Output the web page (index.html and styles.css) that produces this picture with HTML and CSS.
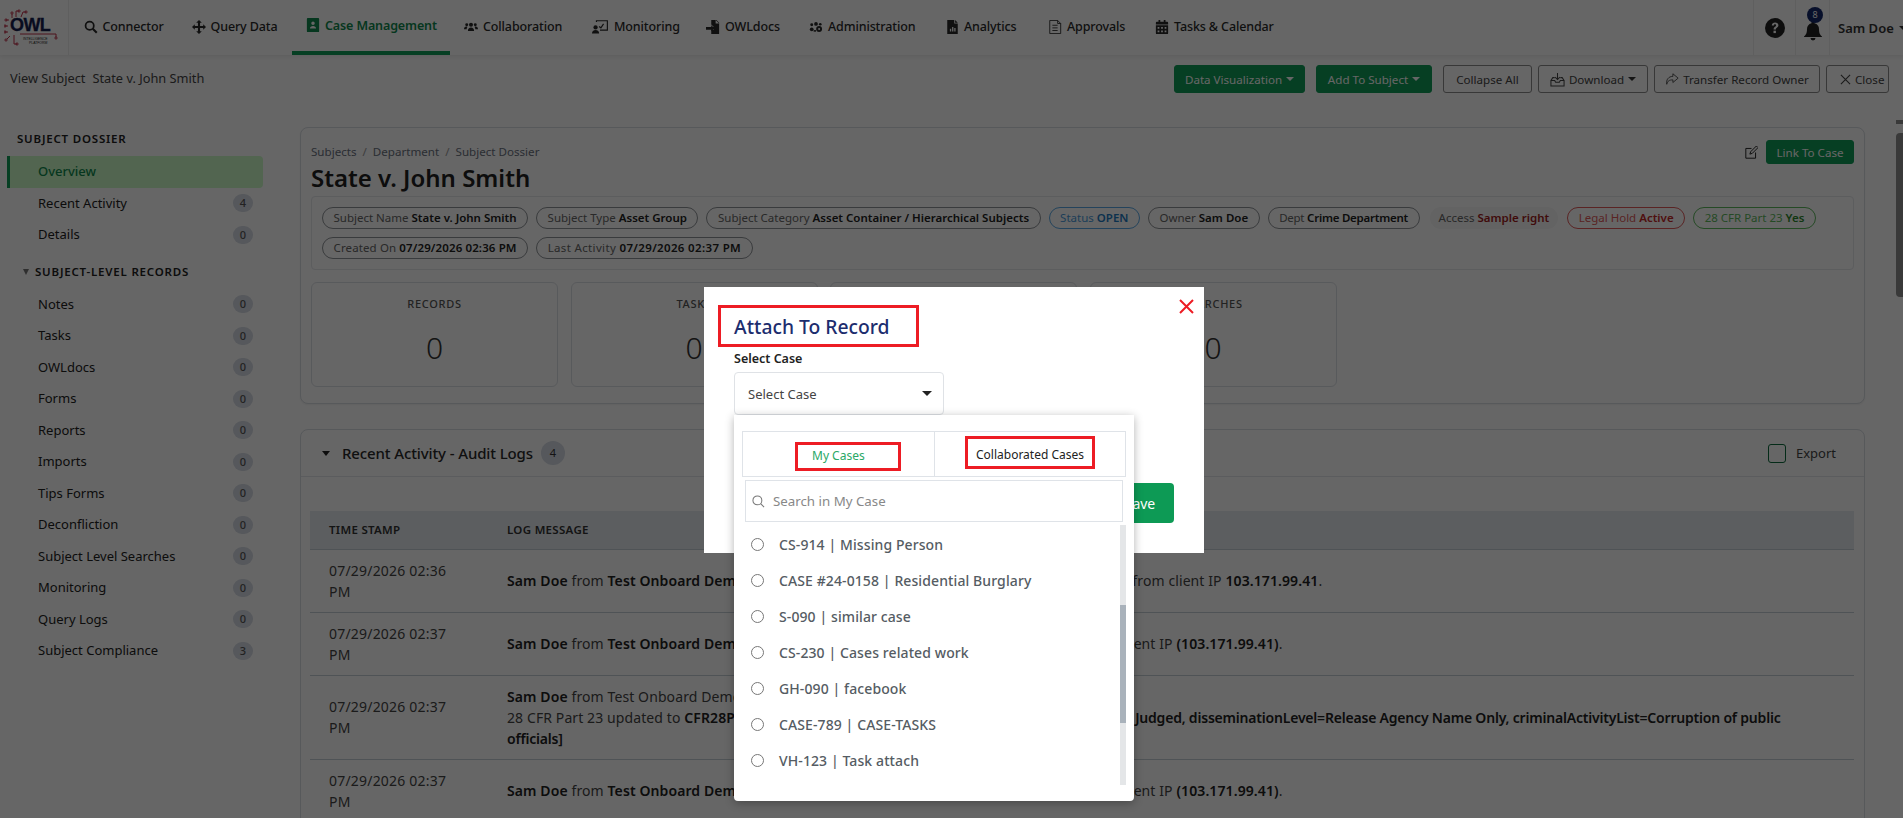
FILE: index.html
```html
<!DOCTYPE html>
<html lang="en">
<head>
<meta charset="utf-8">
<title>State v. John Smith</title>
<link rel="stylesheet" href="styles.css">
</head>
<body>
<header class="topnav">
  <div class="logo">
    <svg width="56" height="38" viewBox="0 0 56 38">
      <g fill="none" stroke="#c0304a" stroke-width="1">
        <path d="M8 9 L8 5 M12 8 L12 2 L15 2 M17 8 L19 3 L22 3 M5 11 L2 11 M4 17 L1 17 M4 23 L1 23 M6 27 L3 30 M10 26 L10 35 L13 35 M16 25 L52 25 L52 28"/>
        <circle cx="8" cy="4" r="1.100"/><circle cx="15" cy="2" r="1.100"/><circle cx="22" cy="3" r="1.100"/><circle cx="2" cy="11" r="1.100"/><circle cx="1" cy="17" r="1.100"/><circle cx="1" cy="23" r="1.100"/><circle cx="2" cy="31" r="1.100"/><circle cx="13" cy="35" r="1.100"/><circle cx="52" cy="29" r="1.100"/>
      </g>
      <text x="6" y="22" class="logo-owl">OWL</text>
      <text x="19" y="31" class="logo-sub">INTELLIGENCE</text>
      <text x="25" y="35" class="logo-sub">PLATFORM</text>
    </svg>
  </div>
  <nav class="navlist">
    <a class="navitem"><svg class="ni" viewBox="0 0 16 16"><circle cx="6.5" cy="6.5" r="4.7" fill="none" stroke="currentColor" stroke-width="2"/><path d="M10 10l4.6 4.6" stroke="currentColor" stroke-width="2.4"/></svg><span>Connector</span></a>
    <a class="navitem"><svg class="ni" viewBox="0 0 16 16"><path d="M8 0l3.200 3.200H9.200v3.600h3.600v-2L16 8l-3.200 3.200v-2H9.200v3.600h2L8 16l-3.200-3.200h2V9.200H3.200v2L0 8l3.200-3.200v2h3.600V3.200h-2z" fill="currentColor"/></svg><span>Query Data</span></a>
    <a class="navitem active"><svg class="ni" viewBox="0 0 14 16"><path d="M1 0h12a1 1 0 0 1 1 1v14a1 1 0 0 1-1 1H1a1 1 0 0 1-1-1V1a1 1 0 0 1 1-1zm6 4a2 2 0 1 0 0 4 2 2 0 0 0 0-4zM3.5 12h7c0-2-1.500-3-3.500-3s-3.500 1-3.500 3z" fill="currentColor" fill-rule="evenodd"/></svg><span>Case Management</span></a>
    <a class="navitem"><svg class="ni" viewBox="0 0 18 16"><g fill="currentColor"><circle cx="9" cy="5" r="2.600"/><circle cx="3.500" cy="5" r="1.900"/><circle cx="14.500" cy="5" r="1.900"/><path d="M5 13c0-3 1.500-4.500 4-4.500s4 1.500 4 4.500zM0 11c0-2 1-3.500 3-3.500.8 0 1.200.2 1.500.5C3.500 9 3.500 10 3.500 11zM18 11c0-2-1-3.500-3-3.500-.8 0-1.200.2-1.500.5 1 1 1 2 1 3z"/></g></svg><span>Collaboration</span></a>
    <a class="navitem"><svg class="ni wide" viewBox="0 0 18 16"><g fill="currentColor"><circle cx="4" cy="9" r="2.400"/><path d="M0 16c0-2.500 1.500-4 4-4s4 1.500 4 4z"/></g><path d="M5 3V1.500h12.300V12H9" fill="none" stroke="currentColor" stroke-width="1.300"/><path d="M8 8l2 1.500L13 5" fill="none" stroke="currentColor" stroke-width="1.300"/></svg><span>Monitoring</span></a>
    <a class="navitem"><svg class="ni" viewBox="0 0 16 16"><path d="M6 0h6l3 3v13H6v-5h3l-2.500-3H9L6 5z M11 0v4h4z" fill="currentColor"/><path d="M0 8h6v-2l3.500 3.500L6 13v-2H0z" fill="currentColor"/></svg><span>OWLdocs</span></a>
    <a class="navitem"><svg class="ni" viewBox="0 0 18 16"><g fill="currentColor"><circle cx="9" cy="4" r="2.400"/><circle cx="3.500" cy="5" r="1.900"/><circle cx="3.500" cy="11" r="2.400"/><circle cx="13" cy="10.500" r="3.800"/><circle cx="14.500" cy="4.500" r="1.700"/><path d="M6 12h3v2H6z"/></g><circle cx="13" cy="10.500" r="1.300" fill="#fff"/></svg><span>Administration</span></a>
    <a class="navitem"><svg class="ni narrow" viewBox="0 0 12 16"><path d="M0 0h8v4h4v12H0zM9 0l3 3H9zM3 13h1.500v-3H3zm2.500 0H7V8H5.500zM8 13h1.500v-4H8z" fill="currentColor" fill-rule="evenodd"/></svg><span>Analytics</span></a>
    <a class="navitem"><svg class="ni" viewBox="0 0 14 16"><path d="M1 .5h9l3.500 3.500v11.500H1z" fill="none" stroke="currentColor"/><path d="M4 6h6M4 9h6M4 12h6M10 .5V4h3.500" fill="none" stroke="currentColor"/></svg><span>Approvals</span></a>
    <a class="navitem"><svg class="ni" viewBox="0 0 14 16"><path d="M3 0h2v2h4V0h2v2h2a1 1 0 0 1 1 1v2H0V3a1 1 0 0 1 1-1h2zM0 6h14v9a1 1 0 0 1-1 1H1a1 1 0 0 1-1-1zm2 2v2h2V8zm4 0v2h2V8zm4 0v2h2V8zm-8 4v2h2v-2zm4 0v2h2v-2zm4 0v2h2v-2z" fill="currentColor" fill-rule="evenodd"/></svg><span>Tasks &amp; Calendar</span></a>
  </nav>
  <div class="navright">
    <div class="nr-help"><svg width="20" height="20" viewBox="0 0 20 20"><circle cx="10" cy="10" r="10" fill="#222"/><path d="M6.800 7.500c0-2 1.500-3 3.300-3s3.300 1 3.300 2.800c0 2.400-2.500 2.200-2.500 4.200H8.600c0-3 2.500-2.800 2.500-4.100 0-.7-.4-1.100-1.100-1.100-.8 0-1.100.5-1.100 1.200z" fill="#fff"/><rect x="8.500" y="12.700" width="2.400" height="2.400" fill="#fff"/></svg></div>
    <div class="nr-bell"><svg width="18" height="20" viewBox="0 0 18 20"><path d="M9 0a1.500 1.500 0 0 1 1.500 1.500v.7C13.500 3 15 5.300 15 8c0 5 1.500 6 3 7.500V16H0v-.5C1.500 14 3 13 3 8c0-2.700 1.500-5 4.500-5.800v-.7A1.500 1.500 0 0 1 9 0zM6.500 17h5a2.500 2.500 0 0 1-5 0z" fill="#222"/></svg><span class="badge8">8</span></div>
    <div class="nr-user"><span>Sam Doe</span><i class="caret dark"></i></div>
  </div>
</header>

<div class="subbar">
  <div class="crumb"><span>View Subject</span><span>State v. John Smith</span></div>
  <div class="actions">
    <button class="btn green b-dv">Data Visualization <i class="caret"></i></button>
    <button class="btn green b-add">Add To Subject <i class="caret"></i></button>
    <button class="btn outline b-col">Collapse All</button>
    <button class="btn outline b-dl"><svg width="15" height="15" viewBox="0 0 16 16"><path d="M1 9l2-3h2M15 9l-2-3h-2M1 9v6h14V9h-4l-1 2H6L5 9zM8 1v7M5.500 5.500L8 8l2.500-2.500" fill="none" stroke="currentColor" stroke-width="1.100"/></svg> Download <i class="caret dark"></i></button>
    <button class="btn outline b-tr"><svg width="14" height="14" viewBox="0 0 16 16"><path d="M9 2l6 5-6 5V9C5 9 3 10 2 14 1 9 4 5 9 5z" fill="none" stroke="currentColor"/></svg> Transfer Record Owner</button>
    <button class="btn outline b-cl"><svg width="11" height="11" viewBox="0 0 12 12"><path d="M1 1l10 10M11 1L1 11" stroke="currentColor" stroke-width="1.200"/></svg> Close</button>
  </div>
</div>

<div class="workspace">
  <aside class="sidebar">
    <h4 class="sb-head">SUBJECT DOSSIER</h4>
    <a class="sb-item current">Overview</a>
    <a class="sb-item">Recent Activity<b>4</b></a>
    <a class="sb-item">Details<b>0</b></a>
    <h4 class="sb-group"><i class="tri"></i>SUBJECT-LEVEL RECORDS</h4>
    <a class="sb-item">Notes<b>0</b></a>
    <a class="sb-item">Tasks<b>0</b></a>
    <a class="sb-item">OWLdocs<b>0</b></a>
    <a class="sb-item">Forms<b>0</b></a>
    <a class="sb-item">Reports<b>0</b></a>
    <a class="sb-item">Imports<b>0</b></a>
    <a class="sb-item">Tips Forms<b>0</b></a>
    <a class="sb-item">Deconfliction<b>0</b></a>
    <a class="sb-item">Subject Level Searches<b>0</b></a>
    <a class="sb-item">Monitoring<b>0</b></a>
    <a class="sb-item">Query Logs<b>0</b></a>
    <a class="sb-item">Subject Compliance<b>3</b></a>
  </aside>

  <main class="main">
    <section class="card summary">
      <div class="sum-top">
        <div class="bread">Subjects <em>/</em> Department <em>/</em> Subject Dossier</div>
        <div class="sum-act">
          <svg width="13" height="13" viewBox="0 0 16 16"><path d="M13 8v7H1V3h7" fill="none" stroke="#222" stroke-width="1.200"/><path d="M6 10l1-3 7-7 2 2-7 7z" fill="none" stroke="#222" stroke-width="1.200"/></svg>
          <button class="btn green b-link">Link To Case</button>
        </div>
      </div>
      <h1 class="title">State v. John Smith</h1>
      <div class="pills">
        <span class="pill">Subject Name <b>State v. John Smith</b></span>
        <span class="pill">Subject Type <b>Asset Group</b></span>
        <span class="pill">Subject Category <b>Asset Container / Hierarchical Subjects</b></span>
        <span class="pill blue">Status <b>OPEN</b></span>
        <span class="pill">Owner <b>Sam Doe</b></span>
        <span class="pill p-dept">Dept <b>Crime Department</b></span>
        <span class="pill plain">Access <b>Sample right</b></span>
        <span class="pill red">Legal Hold <b>Active</b></span>
        <span class="pill grn">28 CFR Part 23 <b>Yes</b></span>
        <span class="pill p-created">Created On <b>07/29/2026 02:36 PM</b></span>
        <span class="pill p-last">Last Activity <b>07/29/2026 02:37 PM</b></span>
      </div>
      <div class="stats">
        <div class="stat"><span>RECORDS</span><strong>0</strong></div>
        <div class="stat"><span>TASKS</span><strong>0</strong></div>
        <div class="stat"><span>FORMS</span><strong>0</strong></div>
        <div class="stat"><span>SEARCHES</span><strong>0</strong></div>
      </div>
    </section>

    <section class="card audit">
      <div class="audit-head">
        <i class="tri dark"></i><h2>Recent Activity - Audit Logs</h2><span class="count">4</span>
        <label class="export"><i class="check"></i>Export</label>
      </div>
      <div class="audit-body">
        <table class="logs">
          <thead><tr><th class="c1">TIME STAMP</th><th>LOG MESSAGE</th></tr></thead>
          <tbody>
            <tr><td>07/29/2026 02:36 PM</td><td><b>Sam Doe</b> from <b>Test Onboard Demo</b> <span class="mid m1">Agency opened the subject dossier record</span> from client IP <b>103.171.99.41</b>.</td></tr>
            <tr><td>07/29/2026 02:37 PM</td><td><b>Sam Doe</b> from <b>Test Onboard Demo</b> <span class="mid m2">Agency updated the subject from the client</span>ent IP <b>(103.171.99.41)</b>.</td></tr>
            <tr><td>07/29/2026 02:37 PM</td><td><b>Sam Doe</b> from Test Onboard Demo Agency updated the subject compliance details.<br>28 CFR Part 23 updated to <b>CFR28Part23</b> <span class="mid m3"><b>[status=Active, reviewStatus=</b></span><b class="sq">Judged, disseminationLevel=Release Agency Name Only, criminalActivityList=Corruption of public officials]</b></td></tr>
            <tr><td>07/29/2026 02:37 PM</td><td><b>Sam Doe</b> from <b>Test Onboard Demo</b> <span class="mid m2">Agency updated the subject from the client</span>ent IP <b>(103.171.99.41)</b>.</td></tr>
          </tbody>
        </table>
      </div>
    </section>
  </main>

  <div class="pagebar"><i></i></div>
</div>

<div class="overlay"></div>

<div class="modal">
  <svg class="modal-x" width="15" height="15" viewBox="0 0 15 15"><path d="M1 1l13 13M14 1L1 14" stroke="#ed1c24" stroke-width="2"/></svg>
  <h3 class="modal-title">Attach To Record</h3>
  <div class="field">
    <label class="field-label">Select Case</label>
    <div class="select"><span>Select Case</span><i class="caret dark big"></i></div>
  </div>
  <div class="modal-foot"><button class="save">Save</button></div>

  <div class="dropdown">
    <div class="tabs">
      <div class="tab"><span class="mark mark-my">My Cases</span></div>
      <div class="tab"><span class="mark mark-co">Collaborated Cases</span></div>
    </div>
    <div class="search">
      <svg width="13" height="13" viewBox="0 0 14 14"><circle cx="5.800" cy="5.800" r="4.800" fill="none" stroke="#777" stroke-width="1.100"/><path d="M9.300 9.300L13 13" stroke="#777" stroke-width="1.100"/></svg>
      <span>Search in My Case</span>
    </div>
    <div class="listwrap">
      <ul class="list">
        <li><i class="radio"></i>CS-914 | Missing Person</li>
        <li><i class="radio"></i>CASE #24-0158 | Residential Burglary</li>
        <li><i class="radio"></i>S-090 | similar case</li>
        <li><i class="radio"></i>CS-230 | Cases related work</li>
        <li><i class="radio"></i>GH-090 | facebook</li>
        <li><i class="radio"></i>CASE-789 | CASE-TASKS</li>
        <li><i class="radio"></i>VH-123 | Task attach</li>
      </ul>
      <div class="listbar"><i></i></div>
    </div>
  </div>
</div>
</body>
</html>
```

FILE: styles.css
```css
* { box-sizing: border-box; }
html, body { margin: 0; padding: 0; }
body {
  position: relative;
  width: 1903px;
  height: 818px;
  overflow: hidden;
  background: #fff;
  color: #333;
  font-family: "Noto Sans", "Open Sans", sans-serif;
  font-size: 13px;
}
h1, h2, h3, h4, ul { margin: 0; padding: 0; }
i, em { font-style: normal; }

/* top navigation */
.topnav {
  display: flex;
  height: 55px;
  box-shadow: 0 2px 4px rgba(0, 0, 0, .08);
}
.logo {
  width: 69px;
  padding: 9px 0 0 4px;
  border-right: 1px solid #eee;
}
.logo-owl { font: 700 18px "Liberation Sans", sans-serif; fill: #14204f; letter-spacing: -.6px; stroke: #14204f; stroke-width: .3px; }
.logo-sub { font: 400 3.400px "Liberation Sans", sans-serif; fill: #222; }
.navlist { display: flex; flex: 1; }
.navitem {
  display: flex;
  align-items: center;
  gap: 5px;
  flex: none;
  height: 55px;
  padding: 0 0 2px 14.500px;
  font-size: 12.500px;
  letter-spacing: -.12px;
  font-weight: 500;
  color: #2a2a2a;
  white-space: nowrap;
}
.navitem:nth-child(1) { width: 108px; }
.navitem:nth-child(2) { width: 114.500px; }
.navitem:nth-child(3) { width: 158px; }
.navitem:nth-child(4) { width: 128px; }
.navitem:nth-child(5) { width: 114px; }
.navitem:nth-child(6) { width: 103px; }
.navitem:nth-child(7) { width: 138px; }
.navitem:nth-child(8) { width: 101px; }
.navitem:nth-child(9) { width: 107px; }
.ni { width: 14px; height: 14px; flex: none; }
.ni.wide { width: 16px; height: 15px; margin-right: 1px; }
.ni.narrow { width: 11px; height: 14px; margin-right: 1px; }
.navitem.active {
  color: #0f8a4e;
  font-weight: 600;
  border-bottom: 4px solid #0f9d58;
  padding-bottom: 1px;
}
.navright { display: flex; height: 55px; }
.nr-help, .nr-bell { display: flex; align-items: center; justify-content: center; border-left: 1px solid #eee; }
.nr-help { width: 42px; }
.nr-bell { position: relative; width: 35px; padding-top: 6px; border-right: 1px solid #eee; }
.badge8 {
  position: absolute;
  top: 7px;
  left: 11px;
  width: 16px;
  height: 16px;
  border-radius: 50%;
  background: #162a6b;
  color: #fff;
  font-size: 9px;
  line-height: 16px;
  text-align: center;
}
.nr-user { display: flex; align-items: center; gap: 5px; width: 73px; padding-left: 8px; font-weight: 600; white-space: nowrap; }
.caret {
  display: inline-block;
  width: 0;
  height: 0;
  border: 4px solid transparent;
  border-top-color: #fff;
  border-bottom-width: 0;
  vertical-align: middle;
}
.caret.dark { border-top-color: #333; }
.caret.big { border-width: 5px 5px 0; border-top-color: #222; }

/* action bar */
.subbar {
  display: flex;
  align-items: center;
  justify-content: space-between;
  height: 48px;
  padding: 0 14px 0 10px;
}
.crumb { display: flex; gap: 7px; margin-top: -2px; font-size: 12.800px; color: #444; }
.actions { display: flex; gap: 6px; }
.btn {
  display: inline-flex;
  align-items: center;
  justify-content: center;
  gap: 4px;
  height: 28px;
  padding: 0;
  border-radius: 3px;
  font-family: inherit;
  font-size: 11.600px;
  white-space: nowrap;
}
.btn.green { background: #0f9d58; border: 1px solid #0f9d58; color: #fff; }
.btn.outline { background: #fff; border: 1px solid #8c8c8c; color: #444; }
.b-dv { width: 131px; margin-right: 5px; }
.b-add { width: 116px; margin-right: 5px; }
.b-col { width: 89px; }
.b-dl { width: 110px; }
.b-tr { width: 166px; }
.btn.b-cl { width: 63px; justify-content: flex-start; padding-left: 13px; }

/* layout */
.workspace { display: flex; height: 715px; }
.sidebar { width: 300px; padding: 28px 37px 0 7px; flex: none; }
.sb-head { height: 16px; margin: 0 0 9px 10px; font-size: 11.500px; line-height: 16px; font-weight: 600; letter-spacing: .8px; color: #222; }
.sb-item {
  display: flex;
  align-items: center;
  justify-content: space-between;
  height: 31.500px;
  padding: 0 10px 2px 31px;
  font-size: 13px;
  color: #222;
}
.sb-item b {
  width: 20px;
  height: 18px;
  margin-top: 1px;
  border-radius: 9px;
  background: #d6dbe5;
  color: #555;
  font-size: 11px;
  font-weight: 500;
  line-height: 18px;
  text-align: center;
}
.sb-item.current {
  height: 32px;
  padding-left: 28px;
  border-left: 3px solid #0f9d58;
  border-radius: 0 4px 4px 0;
  background: #cdfdc8;
  color: #0f8a4e;
  font-weight: 500;
}
.sb-group {
  display: flex;
  align-items: center;
  height: 38px;
  padding: 3px 0 0 16px;
  gap: 6px;
  font-size: 11.500px;
  font-weight: 600;
  letter-spacing: .8px;
  color: #222;
}
.tri { width: 0; height: 0; border: 3.500px solid transparent; border-top: 6px solid #777; border-bottom-width: 0; }
.tri.dark { border-width: 5px 4px 0; border-top-color: #222; }

.main { width: 1565px; padding-top: 24px; flex: none; }
.pagebar { position: relative; width: 7px; margin: 30px 0 0 31px; flex: none; }
.pagebar::before { content: ""; position: absolute; top: -13px; left: 0; width: 7px; height: 4px; background: #8f8f8f; }
.pagebar i { display: block; height: 164px; border-radius: 4px 0 0 4px; background: #8f8f8f; }

.card { border: 1px solid #d9dee3; border-radius: 8px; background: #fff; }
.summary { height: 277px; padding: 12px 10px 0; box-shadow: 0 1px 2px rgba(0, 0, 0, .06); }
.sum-top { display: flex; justify-content: space-between; align-items: center; height: 24px; }
.bread { margin-top: -2px; font-size: 11.600px; color: #6b7280; }
.bread em { margin: 0 3px; color: #999; }
.sum-act { display: flex; align-items: center; gap: 8px; }
.b-link { width: 88px; height: 24px; }
.title { height: 32px; font-size: 24px; line-height: 28px; font-weight: 600; color: #222; }
.pills {
  display: flex;
  flex-wrap: wrap;
  align-content: flex-start;
  gap: 8px;
  height: 74px;
  padding: 10px;
  border: 1px solid #e5e8ec;
  border-radius: 4px;
}
.pill {
  height: 22px;
  padding: 0 10.500px;
  border: 1px solid #8f9398;
  border-radius: 11px;
  font-size: 11.500px;
  line-height: 19px;
  color: #666;
  white-space: nowrap;
}
.pill b { font-weight: 600; color: #222; }
.pill.p-dept { letter-spacing: -.24px; }
.pill.p-created { letter-spacing: .12px; }
.pill.p-last { letter-spacing: .35px; }
.pill.blue { border-color: #5aa9e6; color: #4a9bdc; }
.pill.blue b { color: #1f7cc4; }
.pill.plain { margin: 0 1px 0 2px; padding: 0 8px; border-color: transparent; background: #f7f7f7; }
.pill.plain b { color: #a01c1c; }
.pill.red { border-color: #e05a5a; color: #e05a5a; }
.pill.red b { color: #c62828; }
.pill.grn { border-color: #5cb85c; color: #5cb85c; }
.pill.grn b { color: #2e8b2e; }
.stats { display: grid; grid-template-columns: repeat(4, 247px); gap: 12.500px; margin-top: 12px; }
.stat {
  display: flex;
  flex-direction: column;
  align-items: center;
  height: 105px;
  padding-top: 14px;
  border: 1px solid #dde1e6;
  border-radius: 6px;
  font-size: 11px;
  letter-spacing: .7px;
  color: #555;
}
.stat span { line-height: 14px; font-weight: 500; }
.stat strong { margin-top: 19px; font-size: 30px; line-height: 36px; font-weight: 300; color: #333; letter-spacing: 0; }

.audit { height: 500px; margin-top: 25px; }
.audit-head { display: flex; align-items: center; height: 47px; padding-left: 21px; border-bottom: 1px solid #e3e6ea; }
.audit-head h2 { margin-left: 12px; font-size: 15px; letter-spacing: -.12px; font-weight: 500; color: #2a2a2a; }
.count { width: 24px; height: 24px; margin-left: 8px; border-radius: 50%; background: #d6dbe5; font-size: 11px; line-height: 24px; text-align: center; }
.export { display: flex; align-items: center; gap: 10px; margin: 0 28px 0 auto; font-size: 13px; color: #444; }
.check { width: 18px; height: 19px; border: 1.500px solid #0b6b3c; border-radius: 3px; }
.audit-body { padding: 34px 10px 0 9px; }
.logs { width: 100%; border-collapse: collapse; table-layout: fixed; }
.logs th { height: 38px; padding: 0 19px; background: #e6ebf0; border-bottom: 1px solid #c6d0d8; text-align: left; font-size: 11.500px; font-weight: 600; letter-spacing: .3px; color: #333; }
.logs .c1 { width: 178px; }
.logs td { padding: 10px 19px; border-bottom: 1px solid #c6d0d8; font-size: 14px; line-height: 21px; letter-spacing: .1px; color: #444; vertical-align: middle; }
.logs td:first-child { padding-right: 30px; letter-spacing: .2px; }
.logs td b { color: #222; font-weight: 600; }
.logs td .sq { letter-spacing: -.2px; }
.mid { display: inline-block; overflow: hidden; white-space: nowrap; vertical-align: bottom; }
.m1 { width: 380px; }
.m2 { width: 385px; }
.m3 { width: 360px; }

/* modal layer */
.overlay { position: absolute; inset: 0; background: rgba(0, 0, 0, .6); z-index: 10; }
.modal { position: absolute; left: 704px; top: 287px; z-index: 11; width: 500px; height: 266px; padding: 18px 30px 0 14px; background: #fff; }
.modal-x { position: absolute; top: 12px; right: 10px; }
.modal-title { width: 201px; height: 42px; padding-left: 13px; border: 3px solid #ed1c24; font-size: 19.300px; line-height: 38px; font-weight: 500; color: #1c2d6e; white-space: nowrap; }
.field { margin-left: 16px; padding-top: 4px; }
.field-label { display: block; height: 16px; font-size: 12.500px; line-height: 16px; font-weight: 600; color: #222; }
.select {
  display: flex;
  align-items: center;
  justify-content: space-between;
  width: 210px;
  height: 43px;
  margin-top: 5px;
  padding: 0 11px 0 13px;
  border: 1px solid #dfe2e6;
  border-radius: 4px;
  font-size: 13px;
  color: #444;
}
.modal-foot { display: flex; justify-content: flex-end; margin-top: 68px; }
.save { width: 68px; height: 40px; border: 0; border-radius: 4px; background: #0d9a55; color: #fff; font-family: inherit; font-size: 14px; }
.dropdown {
  position: absolute;
  left: 30px;
  top: 128px;
  width: 400px;
  height: 386px;
  padding: 16px 8px 0;
  border-radius: 0 0 4px 4px;
  background: #fff;
  box-shadow: 0 2px 10px rgba(0, 0, 0, .3);
}
.tabs { display: flex; height: 46px; border: 1px solid #dfe3e8; }
.tab { width: 50%; }
.tab + .tab { border-left: 1px solid #dfe3e8; }
.mark { display: block; border: 3px solid #ed1c24; font-size: 12px; line-height: 17px; white-space: nowrap; }
.mark-my { width: 106px; height: 29px; margin: 10px 0 0 52px; padding: 2px 0 0 14px; color: #2aa866; }
.mark-co { width: 130px; height: 33px; margin: 4px 0 0 30px; padding: 7px 0 0 8px; color: #222; }
.search {
  display: flex;
  align-items: center;
  gap: 8px;
  width: 378px;
  height: 42px;
  margin: 3px 0 0 3px;
  padding-left: 6px;
  border: 1px solid #dfe3e8;
  font-size: 13.300px;
  color: #888;
}
.listwrap { display: flex; justify-content: space-between; height: 260px; margin-top: 3px; }
.list { list-style: none; padding: 1px 0 0 9px; }
.list li { display: flex; align-items: center; gap: 15px; height: 36px; font-size: 14px; letter-spacing: .1px; font-weight: 500; color: #555c63; white-space: nowrap; }
.radio { width: 13px; height: 13px; border: 1px solid #777; border-radius: 50%; }
.listbar { width: 6px; padding-top: 80px; background: #e4e6e8; }
.listbar i { display: block; height: 118px; background: #a9b2bb; }
```
